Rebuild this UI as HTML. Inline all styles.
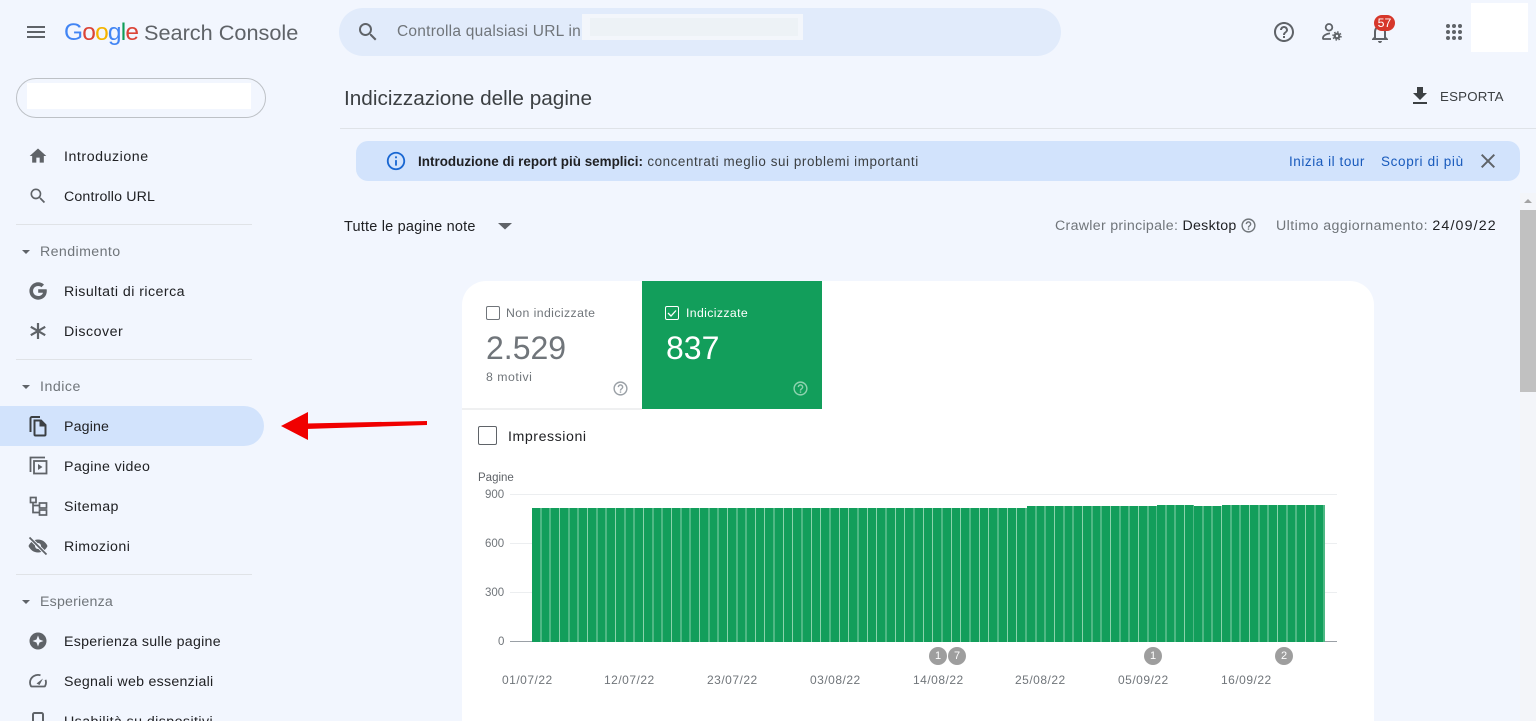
<!DOCTYPE html>
<html lang="it"><head><meta charset="utf-8"><title>Indicizzazione delle pagine</title>
<style>
html,body{margin:0;padding:0;width:1536px;height:721px;overflow:hidden}
body{position:relative;background:#f2f6fe;font-family:"Liberation Sans",Arial,sans-serif;color:#202124}
.a{position:absolute;white-space:nowrap}
.nav{font-size:14.2px;line-height:20px;left:64px;color:#202124}
.sec{font-size:14.2px;line-height:20px;left:40px;color:#70757a}
.hr{position:absolute;left:16px;width:236px;height:1px;background:#e0e3e7}
svg{position:absolute;display:block}
.tick{font-size:11.5px;line-height:14px;color:#70757a;position:absolute;white-space:nowrap}
.date{font-size:12px;letter-spacing:.5px;top:673px}
.gl{position:absolute;left:510px;width:827px;height:1px;background:#eceef0}
.dot{position:absolute;top:647px;width:18px;height:18px;border-radius:50%;background:#9e9e9e;color:#fff;font-size:11px;line-height:18px;text-align:center}
.bar{position:absolute;background:repeating-linear-gradient(90deg,#129e5b 0,#129e5b 8.33px,#8ad3ac 8.33px,#8ad3ac 9.33px)}
</style></head><body>

<!-- top bar -->
<svg style="left:24px;top:20px" width="24" height="24" viewBox="0 0 24 24" fill="#5f6368"><path d="M3 18h18v-2H3v2zm0-5h18v-2H3v2zm0-7v2h18V6H3z"/></svg>
<div class="a" style="left:64px;top:18px;font-size:24.5px;line-height:30px;letter-spacing:-.8px;font-weight:400"><span style="color:#4285f4">G</span><span style="color:#db4437">o</span><span style="color:#f4b400">o</span><span style="color:#4285f4">g</span><span style="color:#0f9d58">l</span><span style="color:#db4437">e</span></div>
<div class="a" style="left:144px;top:18px;font-size:21.7px;line-height:30px;color:#5f6368">Search Console</div>

<div class="a" style="left:339px;top:8px;width:722px;height:48px;border-radius:24px;background:#e1ebfb"></div>
<svg style="left:356px;top:20px" width="24" height="24" viewBox="0 0 24 24" fill="#5f6368"><path d="M15.5 14h-.79l-.28-.27A6.47 6.47 0 0 0 16 9.5 6.5 6.5 0 1 0 9.5 16c1.61 0 3.09-.59 4.23-1.57l.27.28v.79l5 4.99L20.49 19l-4.99-5zm-6 0C7.01 14 5 11.99 5 9.5S7.01 5 9.5 5 14 7.01 14 9.5 11.99 14 9.5 14z"/></svg>
<div class="a" style="left:397px;top:22px;font-size:15.5px;letter-spacing:.24px;line-height:20px;color:#70757a">Controlla qualsiasi URL in</div>
<div class="a" style="left:582px;top:14px;width:221px;height:26px;background:#f3f6fb"></div>
<div class="a" style="left:590px;top:18px;width:208px;height:18px;background:#edf2f6"></div>

<svg style="left:1272px;top:20px" width="24" height="24" viewBox="0 0 24 24" fill="#5f6368"><path d="M11 18h2v-2h-2v2zm1-16C6.48 2 2 6.48 2 12s4.48 10 10 10 10-4.48 10-10S17.52 2 12 2zm0 18c-4.41 0-8-3.59-8-8s3.59-8 8-8 8 3.59 8 8-3.59 8-8 8zm0-14c-2.21 0-4 1.79-4 4h2c0-1.1.9-2 2-2s2 .9 2 2c0 2-3 1.75-3 5h2c0-2.25 3-2.5 3-5 0-2.21-1.79-4-4-4z"/></svg>
<svg style="left:1320px;top:20px" width="24" height="24" viewBox="0 0 24 24" fill="none" stroke="#5f6368" stroke-width="1.8"><circle cx="9" cy="7.3" r="3.3"/><path d="M3 19v-1c0-2.400 3.500-4.300 7-4.600M2.500 19H11"/><circle cx="17" cy="16" r="2.300" stroke-width="2.200"/><circle cx="17" cy="16" r="4" stroke-width="1.400" stroke-dasharray="1.600 1.540"/></svg>
<svg style="left:1368px;top:21px" width="24" height="24" viewBox="0 0 24 24" fill="#5f6368"><path d="M12 22c1.100 0 2-.900 2-2h-4c0 1.100.900 2 2 2zm6-6v-5c0-3.070-1.630-5.640-4.500-6.320V4c0-.830-.670-1.500-1.500-1.500s-1.500.670-1.500 1.500v.680C7.640 5.360 6 7.920 6 11v5l-2 2v1h16v-1l-2-2zm-2 1H8v-6c0-2.480 1.510-4.500 4-4.500s4 2.020 4 4.500v6z"/></svg>
<div class="a" style="left:1374px;top:15px;width:21px;height:16px;border-radius:8px;background:#d6372b;color:#fff;font-size:12.3px;line-height:16px;text-align:center">57</div>
<svg style="left:1442px;top:20px" width="24" height="24" viewBox="0 0 24 24" fill="#5f6368"><circle cx="6" cy="6" r="2"/><circle cx="12" cy="6" r="2"/><circle cx="18" cy="6" r="2"/><circle cx="6" cy="12" r="2"/><circle cx="12" cy="12" r="2"/><circle cx="18" cy="12" r="2"/><circle cx="6" cy="18" r="2"/><circle cx="12" cy="18" r="2"/><circle cx="18" cy="18" r="2"/></svg>
<div class="a" style="left:1471px;top:3px;width:57px;height:49px;background:#fff"></div>

<!-- sidebar -->
<div class="a" style="left:16px;top:78px;width:248px;height:38px;border:1px solid #bdc1c6;border-radius:20px"></div>
<div class="a" style="left:27px;top:83px;width:224px;height:26px;background:#fff"></div>

<svg style="left:28px;top:146px" width="20" height="20" viewBox="0 0 24 24" fill="#5f6368"><path d="M10 20v-6h4v6h5v-8h3L12 3 2 12h3v8z"/></svg>
<div class="a nav" style="top:147px;letter-spacing:.55px">Introduzione</div>
<svg style="left:28px;top:186px" width="20" height="20" viewBox="0 0 24 24" fill="#5f6368"><path d="M15.5 14h-.79l-.28-.27A6.47 6.47 0 0 0 16 9.5 6.5 6.5 0 1 0 9.5 16c1.61 0 3.09-.59 4.23-1.57l.27.28v.79l5 4.99L20.49 19l-4.99-5zm-6 0C7.01 14 5 11.99 5 9.5S7.01 5 9.5 5 14 7.01 14 9.5 11.99 14 9.5 14z"/></svg>
<div class="a nav" style="top:187px;letter-spacing:.15px">Controllo URL</div>
<div class="hr" style="top:224px"></div>

<svg style="left:20px;top:248px" width="12" height="8" viewBox="0 0 12 8" fill="#5f6368"><path d="M2 2h8L6 6z"/></svg>
<div class="a sec" style="top:242px;letter-spacing:.4px">Rendimento</div>
<svg style="left:26px;top:279px" width="24" height="24" viewBox="0 0 24 24" fill="#5f6368"><path d="M20.6 10.2h-8.4v3.5h4.8c-.6 2-2.4 3.3-4.8 3.3A5 5 0 0 1 7 12a5 5 0 0 1 5.100-5c1.300 0 2.400.4 3.300 1.200l2.600-2.600A8.700 8.700 0 0 0 12.100 3.300 8.700 8.700 0 0 0 3.400 12a8.700 8.700 0 0 0 8.700 8.700c5 0 8.700-3.500 8.700-8.800 0-.6-.1-1.200-.2-1.700z"/></svg>
<div class="a nav" style="top:282px;letter-spacing:.45px">Risultati di ricerca</div>
<svg style="left:26px;top:319px" width="24" height="24" viewBox="0 0 24 24" fill="none" stroke="#5f6368" stroke-width="2.2"><path d="M12 4v16M4.800 7.800l14.400 8.400M4.800 16.200l14.400-8.400"/></svg>
<div class="a nav" style="top:322px;letter-spacing:.5px">Discover</div>
<div class="hr" style="top:359px"></div>

<svg style="left:20px;top:383px" width="12" height="8" viewBox="0 0 12 8" fill="#5f6368"><path d="M2 2h8L6 6z"/></svg>
<div class="a sec" style="top:377px;letter-spacing:.5px">Indice</div>
<div class="a" style="left:0;top:406px;width:264px;height:40px;border-radius:0 20px 20px 0;background:#d2e3fc"></div>
<svg style="left:26px;top:414px" width="24" height="24" viewBox="0 0 24 24" fill="none" stroke="#3c4043" stroke-width="2"><path d="M4.500 18V4.500a1.500 1.500 0 0 1 1.500-1.500H14"/><path d="M8.500 6.500h6.500l4.500 4.500v9.500a1 1 0 0 1-1 1H9.500a1 1 0 0 1-1-1z"/><path d="M14.500 6.500v5h5" fill="#3c4043"/></svg>
<div class="a nav" style="top:417px;letter-spacing:.15px">Pagine</div>
<svg style="left:26px;top:453px" width="24" height="24" viewBox="0 0 24 24" fill="none" stroke="#5f6368" stroke-width="1.8"><path d="M4.500 19V4.500H19"/><rect x="8" y="8" width="12.500" height="12.500"/><path d="M12 11v6l4.500-3z" fill="#5f6368" stroke="none"/></svg>
<div class="a nav" style="top:457px;letter-spacing:.35px">Pagine video</div>
<svg style="left:26px;top:494px" width="24" height="24" viewBox="0 0 24 24" fill="none" stroke="#5f6368" stroke-width="1.7"><rect x="4.500" y="3.500" width="5.500" height="5"/><rect x="13.500" y="9" width="7" height="5"/><rect x="13.500" y="16" width="7" height="5"/><path d="M7 8.500v10h6.500M7 11.500h6.500"/></svg>
<div class="a nav" style="top:497px;letter-spacing:.4px">Sitemap</div>
<svg style="left:26px;top:534px" width="24" height="24" viewBox="0 0 24 24" fill="#5f6368"><path d="M12 5.500c-4.200 0-7.800 2.600-9.500 6.500 1.700 3.900 5.300 6.500 9.500 6.500s7.800-2.600 9.500-6.500c-1.700-3.900-5.300-6.500-9.500-6.500z"/><circle cx="12" cy="12" r="3" fill="#f2f6fe"/><path d="M3.500 3.500l17 17" stroke="#f2f6fe" stroke-width="3.600"/><path d="M3.500 3.500l17 17" stroke="#5f6368" stroke-width="1.800"/></svg>
<div class="a nav" style="top:537px;letter-spacing:.45px">Rimozioni</div>
<div class="hr" style="top:574px"></div>

<svg style="left:20px;top:598px" width="12" height="8" viewBox="0 0 12 8" fill="#5f6368"><path d="M2 2h8L6 6z"/></svg>
<div class="a sec" style="top:592px;letter-spacing:.2px">Esperienza</div>
<svg style="left:26px;top:629px" width="24" height="24" viewBox="0 0 24 24"><circle cx="12" cy="12" r="8.500" fill="#5f6368"/><path d="M12 6.500l1.500 4 4 1.500-4 1.500-1.500 4-1.500-4-4-1.500 4-1.500z" fill="#f2f6fe"/></svg>
<div class="a nav" style="top:632px;letter-spacing:.27px">Esperienza sulle pagine</div>
<svg style="left:26px;top:669px" width="24" height="24" viewBox="0 0 24 24" fill="none" stroke="#5f6368" stroke-width="1.800"><path d="M14.500 6.300A8 8 0 0 0 4 13.500c0 1.300.3 2.500.9 3.500a1 1 0 0 0 .9.500h12.400a1 1 0 0 0 .9-.5c.6-1 .9-2.200.9-3.500 0-1-.2-1.900-.5-2.700"/><path d="M10.500 14.500l6.500-5-3.500 6.500z" fill="#5f6368" stroke="none"/></svg>
<div class="a nav" style="top:672px;letter-spacing:.27px">Segnali web essenziali</div>
<svg style="left:26px;top:709px" width="24" height="24" viewBox="0 0 24 24" fill="none" stroke="#5f6368" stroke-width="2"><rect x="7" y="4" width="10" height="18" rx="1.500"/></svg>
<div class="a nav" style="top:712px;letter-spacing:.43px">Usabilità su dispositivi</div>

<!-- red arrow -->
<svg style="left:278px;top:405px" width="152" height="42" viewBox="0 0 152 42"><path d="M28 18.500L149 16v4L28 24z" fill="#f00000"/><path d="M3 21L30 7V35z" fill="#f00000"/></svg>

<!-- header -->
<div class="a" style="left:344px;top:86px;font-size:20.75px;line-height:26px;color:#3c4043">Indicizzazione delle pagine</div>
<svg style="left:1408px;top:84px" width="24" height="24" viewBox="0 0 24 24" fill="#3c4043"><path d="M19 9h-4V3H9v6H5l7 7 7-7zM5 18v2h14v-2H5z"/></svg>
<div class="a" style="left:1440px;top:88px;font-size:13.300px;line-height:18px;letter-spacing:.2px;color:#3c4043">ESPORTA</div>
<div class="a" style="left:340px;top:128px;width:1196px;height:1px;background:#dfe3e8"></div>

<!-- banner -->
<div class="a" style="left:356px;top:141px;width:1164px;height:40px;border-radius:12px;background:#d2e3fc"></div>
<svg style="left:385px;top:150px" width="22" height="22" viewBox="0 0 24 24" fill="#1967d2"><path d="M11 7h2v2h-2zm0 4h2v6h-2zm1-9C6.480 2 2 6.480 2 12s4.480 10 10 10 10-4.480 10-10S17.520 2 12 2zm0 18c-4.410 0-8-3.590-8-8s3.590-8 8-8 8 3.590 8 8-3.590 8-8 8z"/></svg>
<div class="a" style="left:418px;top:153px;font-size:13.400px;line-height:18px;color:#3c4043;letter-spacing:.58px"><b style="color:#202124;letter-spacing:.03px">Introduzione di report più semplici:</b> concentrati meglio sui problemi importanti</div>
<div class="a" style="left:1289px;top:153px;font-size:13.500px;letter-spacing:.55px;line-height:18px;color:#185abc">Inizia il tour</div>
<div class="a" style="left:1381px;top:153px;font-size:13.500px;letter-spacing:.65px;line-height:18px;color:#185abc">Scopri di più</div>
<svg style="left:1476px;top:149px" width="24" height="24" viewBox="0 0 24 24" fill="#5f6368"><path d="M19 6.410L17.590 5 12 10.590 6.410 5 5 6.410 10.590 12 5 17.590 6.410 19 12 13.410 17.590 19 19 17.590 13.410 12z"/></svg>

<!-- scrollbar -->
<div class="a" style="left:1520px;top:193px;width:16px;height:528px;background:#f3f5f9"></div>
<div class="a" style="left:1520px;top:210px;width:16px;height:182px;background:#c1c1c1"></div>
<svg style="left:1522px;top:197px" width="12" height="8" viewBox="0 0 12 8" fill="#a3a3a3"><path d="M6 2l4 4H2z"/></svg>

<!-- filters -->
<div class="a" style="left:344px;top:217px;font-size:14.500px;letter-spacing:.2px;line-height:20px;color:#202124">Tutte le pagine note</div>
<svg style="left:498px;top:222px" width="14" height="8" viewBox="0 0 14 8" fill="#5f6368"><path d="M0 1h14L7 7.500z"/></svg>
<div class="a" style="left:1055px;top:216px;font-size:14.200px;letter-spacing:.3px;line-height:20px;color:#70757a">Crawler principale: <span style="color:#202124">Desktop</span></div>
<svg style="left:1240px;top:217px" width="17" height="17" viewBox="0 0 24 24" fill="#70757a"><path d="M11 18h2v-2h-2v2zm1-16C6.480 2 2 6.480 2 12s4.480 10 10 10 10-4.480 10-10S17.520 2 12 2zm0 18c-4.410 0-8-3.590-8-8s3.590-8 8-8 8 3.590 8 8-3.590 8-8 8zm0-14c-2.210 0-4 1.790-4 4h2c0-1.100.900-2 2-2s2 .900 2 2c0 2-3 1.750-3 5h2c0-2.250 3-2.500 3-5 0-2.210-1.790-4-4-4z"/></svg>
<div class="a" style="left:1276px;top:216px;font-size:14.200px;letter-spacing:.44px;line-height:20px;color:#70757a">Ultimo aggiornamento: <span style="color:#202124;letter-spacing:1.15px">24/09/22</span></div>

<!-- card -->
<div class="a" style="left:462px;top:281px;width:912px;height:440px;background:#fff;border-radius:24px 24px 0 0"></div>
<div class="a" style="left:462px;top:408px;width:180px;height:2px;background:#eff0f1"></div>
<div class="a" style="left:642px;top:281px;width:180px;height:128px;background:#129e5b"></div>

<div class="a" style="left:485.500px;top:306px;width:12px;height:12px;border:1px solid #70757a;border-radius:2px"></div>
<div class="a" style="left:506px;top:304px;font-size:12.300px;letter-spacing:.4px;line-height:18px;color:#70757a">Non indicizzate</div>
<div class="a" style="left:486px;top:329px;font-size:32px;line-height:38px;color:#70757a">2.529</div>
<div class="a" style="left:486px;top:368px;font-size:12.300px;letter-spacing:.5px;line-height:18px;color:#70757a">8 motivi</div>
<svg style="left:612px;top:380px" width="17" height="17" viewBox="0 0 24 24" fill="#9aa0a6"><path d="M11 18h2v-2h-2v2zm1-16C6.480 2 2 6.480 2 12s4.480 10 10 10 10-4.480 10-10S17.520 2 12 2zm0 18c-4.410 0-8-3.590-8-8s3.590-8 8-8 8 3.590 8 8-3.590 8-8 8zm0-14c-2.210 0-4 1.790-4 4h2c0-1.100.900-2 2-2s2 .900 2 2c0 2-3 1.750-3 5h2c0-2.250 3-2.500 3-5 0-2.210-1.790-4-4-4z"/></svg>

<svg style="left:665px;top:306px" width="14" height="14" viewBox="0 0 14 14" fill="none" stroke="#fff"><rect x=".500" y=".500" width="13" height="13" rx="1.500"/><path d="M3 7l3 3 5-5.500" stroke-width="1.300"/></svg>
<div class="a" style="left:686px;top:304px;font-size:12.300px;letter-spacing:.36px;line-height:18px;color:#fff">Indicizzate</div>
<div class="a" style="left:666px;top:329px;font-size:32px;line-height:38px;color:#fff">837</div>
<svg style="left:792px;top:380px" width="17" height="17" viewBox="0 0 24 24" fill="#8fd3b0"><path d="M11 18h2v-2h-2v2zm1-16C6.480 2 2 6.480 2 12s4.480 10 10 10 10-4.480 10-10S17.520 2 12 2zm0 18c-4.410 0-8-3.590-8-8s3.590-8 8-8 8 3.590 8 8-3.590 8-8 8zm0-14c-2.210 0-4 1.790-4 4h2c0-1.100.900-2 2-2s2 .900 2 2c0 2-3 1.750-3 5h2c0-2.250 3-2.500 3-5 0-2.210-1.790-4-4-4z"/></svg>

<div class="a" style="left:478px;top:426px;width:17px;height:17px;border:1.500px solid #5f6368;border-radius:2px"></div>
<div class="a" style="left:508px;top:427px;font-size:14.200px;letter-spacing:.55px;line-height:20px;color:#202124">Impressioni</div>

<!-- chart -->
<div class="a" style="left:478px;top:471px;font-size:11.500px;line-height:14px;color:#5f6368">Pagine</div>
<div class="tick" style="left:485px;top:488px">900</div>
<div class="tick" style="left:485px;top:537px">600</div>
<div class="tick" style="left:485px;top:586px">300</div>
<div class="tick" style="left:498px;top:635px">0</div>
<div class="gl" style="top:494px"></div>
<div class="gl" style="top:543px"></div>
<div class="gl" style="top:592px"></div>
<div class="gl" style="top:641px;background:#9aa0a6"></div>

<div class="bar" style="left:532px;top:508px;width:495px;height:134px"></div>
<div class="bar" style="left:1027px;top:506px;width:130px;height:136px"></div>
<div class="bar" style="left:1157px;top:505px;width:37px;height:137px"></div>
<div class="bar" style="left:1194px;top:506px;width:28px;height:136px"></div>
<div class="bar" style="left:1222px;top:505px;width:103px;height:137px"></div>

<div class="dot" style="left:929px">1</div>
<div class="dot" style="left:948px">7</div>
<div class="dot" style="left:1144px">1</div>
<div class="dot" style="left:1275px">2</div>

<div class="tick date" style="left:502px">01/07/22</div>
<div class="tick date" style="left:604px">12/07/22</div>
<div class="tick date" style="left:707px">23/07/22</div>
<div class="tick date" style="left:810px">03/08/22</div>
<div class="tick date" style="left:913px">14/08/22</div>
<div class="tick date" style="left:1015px">25/08/22</div>
<div class="tick date" style="left:1118px">05/09/22</div>
<div class="tick date" style="left:1221px">16/09/22</div>
</body></html>
